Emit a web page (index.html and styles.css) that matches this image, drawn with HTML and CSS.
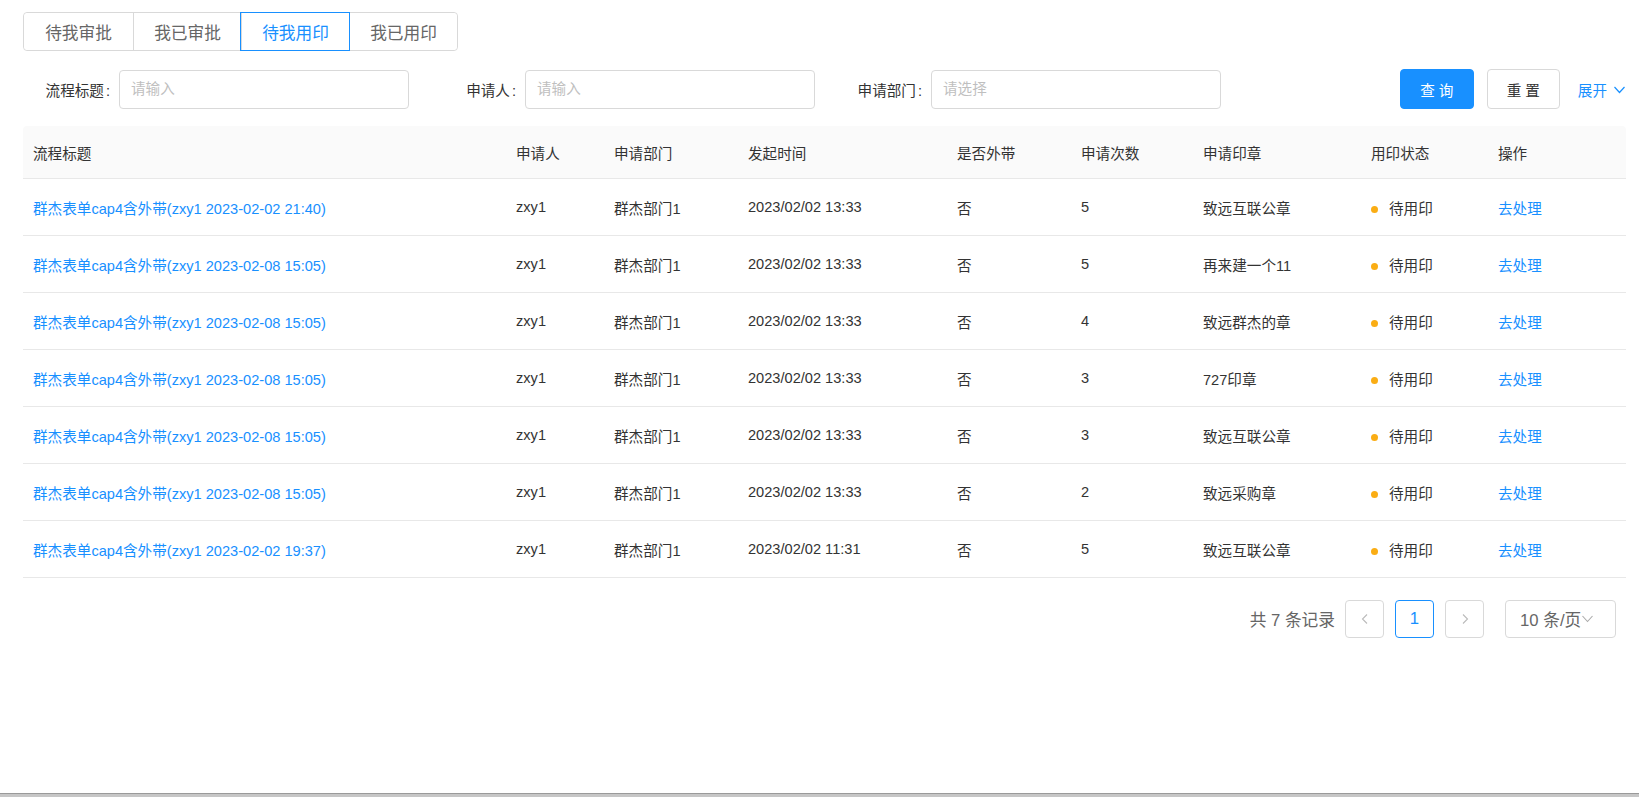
FILE: index.html
```html
<!DOCTYPE html>
<html lang="zh-CN">
<head>
  <meta charset="UTF-8" />
  <title>用印管理</title>
  <link rel="stylesheet" href="styles.css">
</head>
<body>

<div class="page">
  <div class="tabs">
    <button class="tab">待我审批</button>
    <button class="tab">我已审批</button>
    <button class="tab active">待我用印</button>
    <button class="tab">我已用印</button>
  </div>

  <div class="search">
    <div class="field">
      <label>流程标题</label>
      <div class="input">请输入</div>
    </div>
    <div class="field">
      <label>申请人</label>
      <div class="input">请输入</div>
    </div>
    <div class="field">
      <label>申请部门</label>
      <div class="input">请选择</div>
    </div>
    <div class="actions">
      <button class="btn primary">查 询</button>
      <button class="btn">重 置</button>
      <a class="expand">展开
        <svg width="13" height="13" viewBox="0 0 13 13"><path d="M1.5 4 L6.5 9.5 L11.5 4" fill="none" stroke="currentColor" stroke-width="1.2"/></svg>
      </a>
    </div>
  </div>

  <table class="grid">
    <colgroup>
      <col style="width:483px"><col style="width:98px"><col style="width:134px"><col style="width:209px"><col style="width:124px"><col style="width:122px"><col style="width:168px"><col style="width:127px"><col>
    </colgroup>
    <thead>
      <tr>
        <th>流程标题</th><th>申请人</th><th>申请部门</th><th>发起时间</th><th>是否外带</th><th>申请次数</th><th>申请印章</th><th>用印状态</th><th>操作</th>
      </tr>
    </thead>
    <tbody>
      <tr>
        <td><a class="link">群杰表单cap4含外带(zxy1 2023-02-02 21:40)</a></td><td>zxy1</td><td>群杰部门1</td><td>2023/02/02 13:33</td><td>否</td><td>5</td><td>致远互联公章</td>
        <td><span class="dot"></span>待用印</td><td><a class="link">去处理</a></td>
      </tr>
      <tr>
        <td><a class="link">群杰表单cap4含外带(zxy1 2023-02-08 15:05)</a></td><td>zxy1</td><td>群杰部门1</td><td>2023/02/02 13:33</td><td>否</td><td>5</td><td>再来建一个11</td>
        <td><span class="dot"></span>待用印</td><td><a class="link">去处理</a></td>
      </tr>
      <tr>
        <td><a class="link">群杰表单cap4含外带(zxy1 2023-02-08 15:05)</a></td><td>zxy1</td><td>群杰部门1</td><td>2023/02/02 13:33</td><td>否</td><td>4</td><td>致远群杰的章</td>
        <td><span class="dot"></span>待用印</td><td><a class="link">去处理</a></td>
      </tr>
      <tr>
        <td><a class="link">群杰表单cap4含外带(zxy1 2023-02-08 15:05)</a></td><td>zxy1</td><td>群杰部门1</td><td>2023/02/02 13:33</td><td>否</td><td>3</td><td>727印章</td>
        <td><span class="dot"></span>待用印</td><td><a class="link">去处理</a></td>
      </tr>
      <tr>
        <td><a class="link">群杰表单cap4含外带(zxy1 2023-02-08 15:05)</a></td><td>zxy1</td><td>群杰部门1</td><td>2023/02/02 13:33</td><td>否</td><td>3</td><td>致远互联公章</td>
        <td><span class="dot"></span>待用印</td><td><a class="link">去处理</a></td>
      </tr>
      <tr>
        <td><a class="link">群杰表单cap4含外带(zxy1 2023-02-08 15:05)</a></td><td>zxy1</td><td>群杰部门1</td><td>2023/02/02 13:33</td><td>否</td><td>2</td><td>致远采购章</td>
        <td><span class="dot"></span>待用印</td><td><a class="link">去处理</a></td>
      </tr>
      <tr>
        <td><a class="link">群杰表单cap4含外带(zxy1 2023-02-02 19:37)</a></td><td>zxy1</td><td>群杰部门1</td><td>2023/02/02 11:31</td><td>否</td><td>5</td><td>致远互联公章</td>
        <td><span class="dot"></span>待用印</td><td><a class="link">去处理</a></td>
      </tr>
    </tbody>
  </table>

  <div class="pager">
    <span class="total">共 7 条记录</span>
    <button class="page-btn arrow">
      <svg width="12" height="12" viewBox="0 0 12 12"><path d="M8 1.5 L3.5 6 L8 10.5" fill="none" stroke="currentColor" stroke-width="1.1"/></svg>
    </button>
    <button class="page-btn current">1</button>
    <button class="page-btn arrow">
      <svg width="12" height="12" viewBox="0 0 12 12"><path d="M4 1.5 L8.5 6 L4 10.5" fill="none" stroke="currentColor" stroke-width="1.1"/></svg>
    </button>
    <div class="size-select">10 条/页<svg width="13" height="13" viewBox="0 0 13 13"><path d="M1.5 4 L6.5 9.5 L11.5 4" fill="none" stroke="currentColor" stroke-width="1.1"/></svg></div>
  </div>
</div>

<div class="under"></div>

</body>
</html>
```

FILE: styles.css
```css
html, body { margin: 0; padding: 0; height: 100%; background: #fff; overflow: hidden; }
body { display: flex; flex-direction: column; font-family: "Liberation Sans", "Noto Sans CJK SC", sans-serif; font-size: 14.6px; color: #333; }
button { font-family: inherit; }

.page { flex: 1; padding: 12px 13px 0 23px; }

/* 顶部切换 */
.tabs { display: inline-flex; border: 1px solid #d9d9d9; border-radius: 4px; height: 37px; }
.tab { width: 108px; height: 37px; margin: 0; padding: 0; border: none; border-left: 1px solid #d9d9d9; background: #fff; color: #666; font-size: 16.7px; cursor: pointer; }
.tab:first-child { border-left: none; border-radius: 4px 0 0 4px; width: 109px; }
.tab:last-child { border-radius: 0 4px 4px 0; }
.tab.active { color: #1890ff; outline: 1px solid #1890ff; position: relative; }

/* 查询条件 */
.search { display: flex; align-items: center; gap: 20px; margin-top: 18px; height: 40px; }
.field { display: flex; align-items: center; }
.field label { width: 87px; padding-right: 9px; text-align: right; color: #333; }
.field label::after { content: ":"; margin-left: 2px; }
.input { box-sizing: border-box; width: 290px; height: 39px; border: 1px solid #d9d9d9; border-radius: 4px; padding: 0 11px; line-height: 37px; color: #bfbfbf; }
.actions { margin-left: auto; display: flex; align-items: center; gap: 13px; }
.btn { box-sizing: border-box; width: 73px; height: 40px; border: 1px solid #d9d9d9; border-radius: 4px; background: #fff; color: #333; font-size: 14.6px; cursor: pointer; }
.btn.primary { width: 74px; background: #1890ff; border-color: #1890ff; color: #fff; }
.expand { display: flex; align-items: center; gap: 6px; margin-left: 5px; color: #1890ff; cursor: pointer; }

/* 表格 */
.grid { width: 100%; margin-top: 17px; border-collapse: separate; border-spacing: 0; table-layout: fixed; }
.grid th { height: 52px; padding: 0 10px; background: #fafafa; text-align: left; font-weight: normal; color: #333; border-bottom: 1px solid #e8e8e8; }
.grid th:first-child { border-top-left-radius: 4px; }
.grid th:last-child { border-top-right-radius: 4px; }
.grid td { height: 56px; padding: 0 10px; border-bottom: 1px solid #e8e8e8; color: #333; white-space: nowrap; }
.link { color: #1890ff; cursor: pointer; }
.dot { display: inline-block; width: 7px; height: 7px; border-radius: 50%; background: #faad14; margin-right: 11px; vertical-align: 1px; }

/* 分页 */
.pager { display: flex; align-items: center; justify-content: flex-end; margin-top: 22px; padding-right: 10px; font-size: 16.7px; color: #666; }
.total { margin-right: 10px; }
.page-btn { box-sizing: border-box; width: 39px; height: 38px; margin-right: 11px; border: 1px solid #d9d9d9; border-radius: 4px; background: #fff; color: #bbb; font-size: 16.7px; display: flex; align-items: center; justify-content: center; padding: 0; }
.page-btn.current { border-color: #1890ff; color: #1890ff; }
.page-btn.arrow:last-of-type { margin-right: 21px; }
.size-select { box-sizing: border-box; width: 111px; height: 38px; border: 1px solid #d9d9d9; border-radius: 4px; display: flex; align-items: center; padding-left: 14px; color: #666; }
.size-select svg { color: #aaa; margin-top: -2px; }

/* 下层残留 */
.under { height: 3px; background: #c6c6c6; border-top: 1px solid #9a9a9a; }
```
